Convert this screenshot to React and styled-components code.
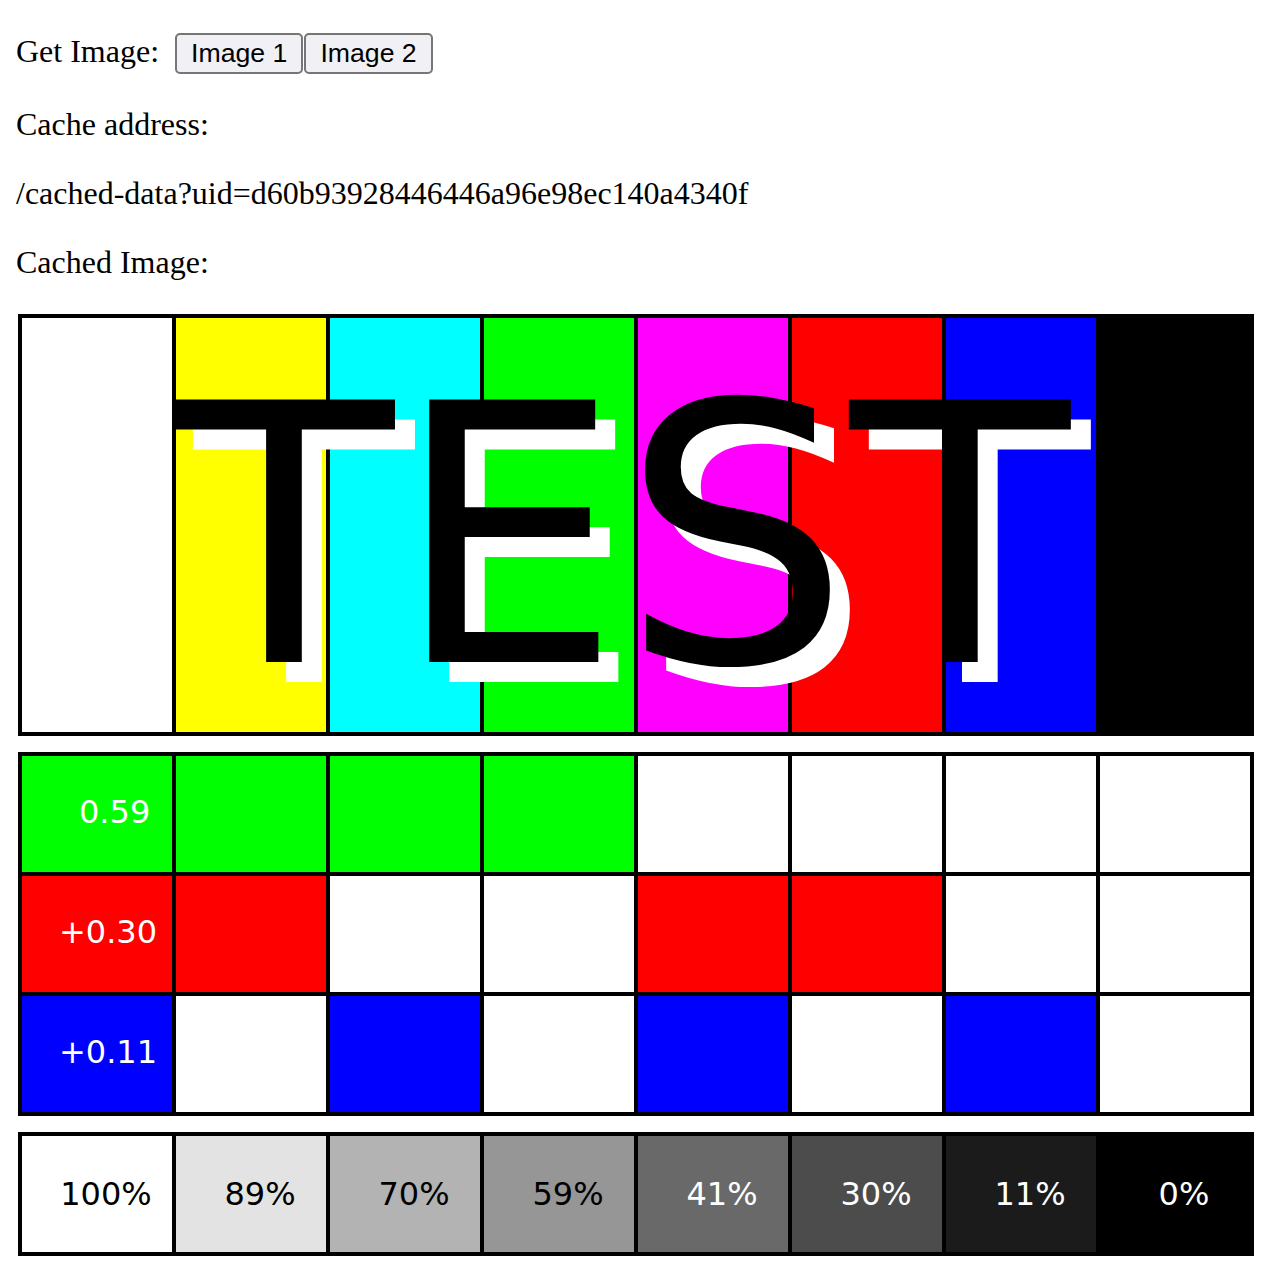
import React from "react";
import styled, { createGlobalStyle } from "styled-components";

const Global = createGlobalStyle`
  body {
    margin: 16px;
    background: #fff;
    color: #000;
    font-family: "Liberation Serif", "Times New Roman", serif;
    font-size: 32px;
  }
`;

const Line = styled.p`
  margin: ${({ $first }) => ($first ? "17px 0 32px" : "32px 0")};
`;

const Label = styled.span`
  margin-right: 16px;
`;

const Button = styled.button`
  font-family: "Liberation Sans", Arial, sans-serif;
  font-size: 26.67px;
  color: #000;
  background: #f0f0f5;
  border: 2px solid #767676;
  border-radius: 5px;
  padding: 3px 14px;
  margin: 0 1px 0 0;
`;

const Card = styled.svg`
  display: block;
  font-family: "DejaVu Sans", sans-serif;
`;

const TOP = ["#fff", "#ff0", "#0ff", "#0f0", "#f0f", "#f00", "#00f", "#000"];

const MIX = [
  { color: "#0f0", label: "0.59", x: 63, on: [1, 1, 1, 1, 0, 0, 0, 0] },
  { color: "#f00", label: "+0.30", x: 43, on: [1, 1, 0, 0, 1, 1, 0, 0] },
  { color: "#00f", label: "+0.11", x: 43, on: [1, 0, 1, 0, 1, 0, 1, 0] },
];

const GRAYS = [
  ["#fff", "100%", "#000"],
  ["#e3e3e3", "89%", "#000"],
  ["#b3b3b3", "70%", "#000"],
  ["#969696", "59%", "#000"],
  ["#696969", "41%", "#fff"],
  ["#4c4c4c", "30%", "#fff"],
  ["#1b1b1b", "11%", "#fff"],
  ["#000", "0%", "#fff"],
];

// cell left edge in card coords
const cx = (k) => 6 + 154 * k;

function TestCard() {
  return (
    <Card width="1240" height="944" viewBox="0 0 1240 944">
      {/* colour bars */}
      <rect x="2" y="1" width="1236" height="422" fill="#000" />
      {TOP.map((c, k) => (
        <rect key={k} x={cx(k)} y="5" width="150" height="414" fill={c} />
      ))}
      <text x="178" y="369" fontSize="360" fill="#fff">TEST</text>
      <text x="158" y="349" fontSize="360" fill="#000">TEST</text>

      {/* luminance mix */}
      <rect x="2" y="439" width="1236" height="364" fill="#000" />
      {MIX.map((row, r) =>
        row.on.map((on, k) => (
          <rect
            key={`${r}-${k}`}
            x={cx(k)}
            y={443 + 120 * r}
            width="150"
            height="116"
            fill={on ? row.color : "#fff"}
          />
        ))
      )}
      {MIX.map((row, r) => (
        <text key={row.label} x={row.x} y={510 + 120 * r} fontSize="32" fill="#fff">
          {row.label}
        </text>
      ))}

      {/* grey steps */}
      <rect x="2" y="819" width="1236" height="124" fill="#000" />
      {GRAYS.map(([bg, label, fg], k) => (
        <g key={label}>
          <rect x={cx(k)} y="823" width="150" height="116" fill={bg} />
          <text x={cx(k) + 84} y="892" fontSize="32" fill={fg} textAnchor="middle">
            {label}
          </text>
        </g>
      ))}
    </Card>
  );
}

export default function App() {
  return (
    <>
      <Global />
      <Line $first>
        <Label>Get Image:</Label>
        <Button>Image 1</Button>
        <Button>Image 2</Button>
      </Line>
      <Line>Cache address:</Line>
      <Line>/cached-data?uid=d60b93928446446a96e98ec140a4340f</Line>
      <Line>Cached Image:</Line>
      <TestCard />
    </>
  );
}
